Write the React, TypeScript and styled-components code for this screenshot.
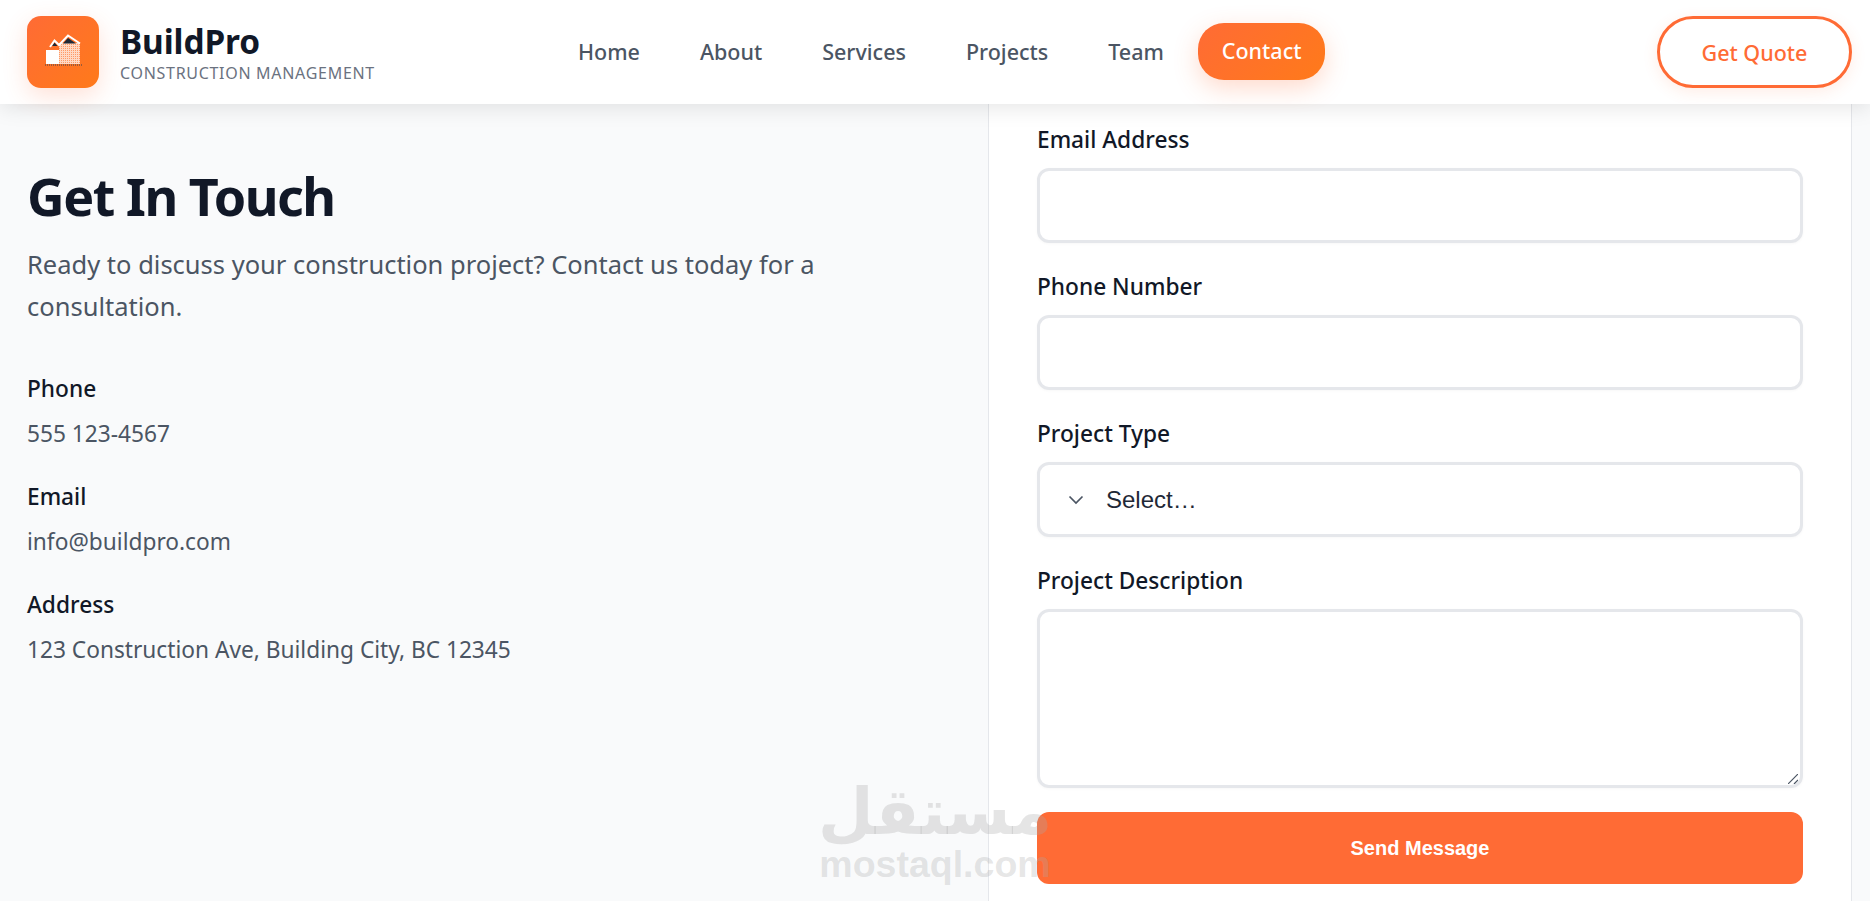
import React from 'react';
import styled, { createGlobalStyle } from 'styled-components';

const Global = createGlobalStyle`
  html, body { margin: 0; padding: 0; height: 901px; overflow: hidden; background: #f9fafb; }
  * { box-sizing: border-box; }
  body { font-family: "Noto Sans", "Open Sans", sans-serif; color: #111827; }
`;

const Page = styled.div`
  position: relative;
  width: 1870px;
  height: 901px;
  overflow: hidden;
  display: flex;
  flex-direction: column;
`;

const Header = styled.header`
  position: relative;
  z-index: 2;
  flex: 0 0 104px;
  display: flex;
  align-items: center;
  padding: 0 18px 0 27px;
  background: #fff;
  box-shadow: 0 4px 20px rgba(0, 0, 0, 0.1);
`;

const Brand = styled.div`
  display: flex;
  align-items: center;
  gap: 21px;
  width: 527px;
`;

const LogoBox = styled.div`
  width: 72px;
  height: 72px;
  border-radius: 14px;
  background: linear-gradient(135deg, #ff6b35, #ff7a1a);
  box-shadow: 0 8px 25px rgba(255, 107, 53, 0.2);
  display: flex;
`;

const BrandText = styled.div`
  display: flex;
  flex-direction: column;
`;

const BrandName = styled.div`
  font-size: 33.4px;
  line-height: 38px;
  font-weight: 700;
  letter-spacing: -0.1px;
  padding-top: 1px;
  color: #111827;
`;

const BrandSub = styled.div`
  font-size: 16px;
  line-height: 22px;
  margin-top: 2px;
  letter-spacing: 0.7px;
  color: #6b7280;
  text-transform: uppercase;
`;

const Nav = styled.nav`
  display: flex;
  align-items: center;
  gap: 12px;
`;

const NavItem = styled.a<{ $active?: boolean }>`
  display: block;
  padding: 0 24px;
  height: 57px;
  line-height: 56px;
  margin-bottom: ${p => (p.$active ? '1px' : '0')};
  margin-left: ${p => (p.$active ? '-2px' : '0')};
  border-radius: 26px;
  font-size: 21.5px;
  font-weight: 500;
  color: ${p => (p.$active ? '#fff' : '#4b5563')};
  background: ${p => (p.$active ? 'linear-gradient(135deg, #ff6b35, #ff7a1a)' : 'transparent')};
  box-shadow: ${p => (p.$active ? '0 8px 25px rgba(255, 107, 53, 0.25)' : 'none')};
`;

const QuoteButton = styled.a`
  margin-left: auto;
  width: 195px;
  height: 72px;
  border: 3px solid #ff6b35;
  border-radius: 36px;
  background: #fff;
  color: #ff6b35;
  font-size: 21.5px;
  font-weight: 500;
  display: flex;
  align-items: center;
  justify-content: center;
  box-shadow: 0 4px 15px rgba(255, 107, 53, 0.12);
`;

const Main = styled.main`
  flex: 1;
  display: flex;
  padding-right: 18px;
  min-height: 0;
`;

const InfoColumn = styled.section`
  width: 988px;
  padding: 58px 0 0 27px;
`;

const Title = styled.h1`
  margin: 0;
  font-size: 52px;
  line-height: 68px;
  font-weight: 700;
  letter-spacing: -1.5px;
  color: #111827;
`;

const Lead = styled.p`
  margin: 13px 0 0;
  width: 860px;
  font-size: 25.5px;
  line-height: 42px;
  color: #4b5563;
`;

const InfoList = styled.div`
  margin-top: 48px;
  display: flex;
  flex-direction: column;
  gap: 35px;
`;

const InfoItem = styled.div`
  display: flex;
  flex-direction: column;
  gap: 17px;
`;

const InfoLabel = styled.div`
  font-size: 22.7px;
  line-height: 28px;
  font-weight: 500;
  color: #111827;
`;

const InfoValue = styled.div`
  font-size: 22.7px;
  line-height: 28px;
  color: #4b5563;
`;

const FormPanel = styled.section`
  flex: 1;
  border-left: 1px solid #e5e7eb;
  border-right: 1px solid #e5e7eb;
  background: #fff;
  padding: 22px 48px 0;
  display: flex;
  flex-direction: column;
`;

const Field = styled.div`
  display: flex;
  flex-direction: column;
  margin-bottom: 30px;
  &:last-of-type { margin-bottom: 24px; }
`;

const Label = styled.label`
  font-size: 22.7px;
  line-height: 28px;
  font-weight: 500;
  color: #111827;
  margin-bottom: 14px;
`;

const controlCss = `
  width: 100%;
  border: 3px solid #e5e7eb;
  border-radius: 12px;
  background: #fff;
  box-shadow: 0 1px 3px rgba(0, 0, 0, 0.03);
  outline: none;
`;

const Input = styled.input`
  ${controlCss}
  height: 75px;
`;

const SelectBox = styled.div`
  ${controlCss}
  height: 75px;
  display: flex;
  align-items: center;
  gap: 22px;
  padding-left: 28px;
  font-family: "Liberation Sans", Arial, sans-serif;
  font-size: 24px;
  color: #1f2937;
`;

const TextAreaWrap = styled.div`
  position: relative;
  display: flex;
`;

const TextArea = styled.textarea`
  ${controlCss}
  height: 179px;
  display: block;
  resize: none;
`;

const Grip = styled.svg`
  position: absolute;
  right: 5px;
  bottom: 4px;
  pointer-events: none;
`;

const SendButton = styled.button`
  height: 72px;
  width: 100%;
  border: 0;
  border-radius: 12px;
  background: #ff6b35;
  color: #fff;
  font-family: "Liberation Sans", Arial, sans-serif;
  font-size: 20px;
  font-weight: 700;
  flex: none;
`;

const Watermark = styled.div`
  position: absolute;
  z-index: 3;
  left: 823px;
  top: 778px;
  width: 224px;
  pointer-events: none;
  display: flex;
  flex-direction: column;
  align-items: center;
  color: rgba(170, 170, 170, 0.3);
  font-weight: 700;
`;

const WatermarkArabic = styled.div`
  font-family: "DejaVu Sans", sans-serif;
  font-size: 64px;
  line-height: 68px;
  direction: rtl;
`;

const WatermarkLatin = styled.div`
  font-family: "Liberation Sans", Arial, sans-serif;
  font-size: 37.5px;
  line-height: 36px;
  white-space: nowrap;
`;

const Logo = () => (
  <svg width="72" height="72" viewBox="0 0 72 72">
    <defs>
      <pattern id="speckle" width="2" height="2" patternUnits="userSpaceOnUse">
        <rect width="2" height="2" fill="#ffd9c4" />
        <rect width="1" height="1" fill="#ff9a66" />
      </pattern>
    </defs>
    <rect x="32" y="27" width="21" height="21" fill="url(#speckle)" />
    <rect x="19" y="34" width="13" height="14" fill="#fff" />
    <path d="M36 27.5 41 22l8 5.5zM25 30l2.5-3.500 3 3.500z" fill="#1f2937" />
    <path d="M23 31l4.500-6.500 4.500 4.500 9-9.500 12 8" fill="none" stroke="#fff" strokeWidth="2" />
    <path d="M18 49h37" stroke="#374151" strokeWidth="1" strokeDasharray="1 1" />
  </svg>
);

const Chevron = () => (
  <svg width="16" height="10" viewBox="0 0 16 10">
    <path d="M1.500 1.500 8 8l6.500-6.500" fill="none" stroke="#4b5563" strokeWidth="1.700" />
  </svg>
);

const navItems = ['Home', 'About', 'Services', 'Projects', 'Team'];
const info = [
  ['Phone', '555 123-4567'],
  ['Email', 'info@buildpro.com'],
  ['Address', '123 Construction Ave, Building City, BC 12345'],
];

export default function App() {
  return (
    <Page>
      <Global />
      <Header>
        <Brand>
          <LogoBox>
            <Logo />
          </LogoBox>
          <BrandText>
            <BrandName>BuildPro</BrandName>
            <BrandSub>Construction Management</BrandSub>
          </BrandText>
        </Brand>
        <Nav>
          {navItems.map(n => (
            <NavItem key={n}>{n}</NavItem>
          ))}
          <NavItem $active>Contact</NavItem>
        </Nav>
        <QuoteButton>Get Quote</QuoteButton>
      </Header>
      <Main>
        <InfoColumn>
          <Title>Get In Touch</Title>
          <Lead>Ready to discuss your construction project? Contact us today for a consultation.</Lead>
          <InfoList>
            {info.map(([k, v]) => (
              <InfoItem key={k}>
                <InfoLabel>{k}</InfoLabel>
                <InfoValue>{v}</InfoValue>
              </InfoItem>
            ))}
          </InfoList>
        </InfoColumn>
        <FormPanel>
          <Field>
            <Label>Email Address</Label>
            <Input />
          </Field>
          <Field>
            <Label>Phone Number</Label>
            <Input />
          </Field>
          <Field>
            <Label>Project Type</Label>
            <SelectBox>
              <Chevron />
              Select…
            </SelectBox>
          </Field>
          <Field>
            <Label>Project Description</Label>
            <TextAreaWrap>
              <TextArea />
              <Grip width="10" height="10" viewBox="0 0 10 10">
                <path d="M0 10 10 0M6 10l4-4" fill="none" stroke="#4b5563" strokeWidth="1.200" />
              </Grip>
            </TextAreaWrap>
          </Field>
          <SendButton>Send Message</SendButton>
        </FormPanel>
      </Main>
      <Watermark>
        <WatermarkArabic>مستقل</WatermarkArabic>
        <WatermarkLatin>mostaql.com</WatermarkLatin>
      </Watermark>
    </Page>
  );
}
